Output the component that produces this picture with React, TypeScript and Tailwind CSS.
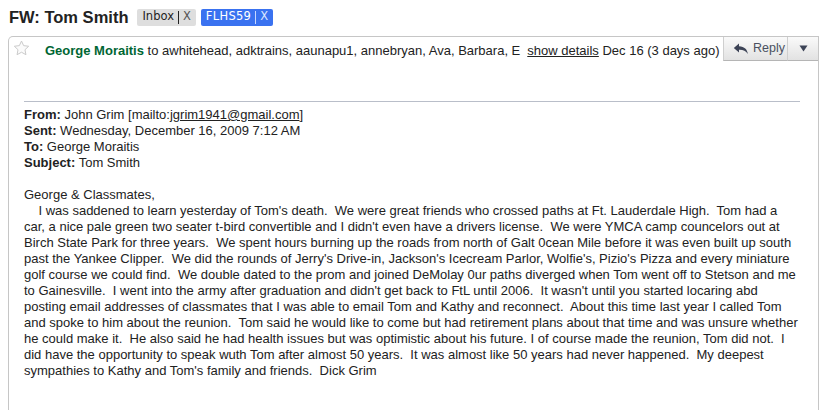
import React from "react";

const bodyLines = [
  "    I was saddened to learn yesterday of Tom's death.  We were great friends who crossed paths at Ft. Lauderdale High.  Tom had a",
  "car, a nice pale green two seater t-bird convertible and I didn't even have a drivers license.  We were YMCA camp councelors out at",
  "Birch State Park for three years.  We spent hours burning up the roads from north of Galt 0cean Mile before it was even built up south",
  "past the Yankee Clipper.  We did the rounds of Jerry's Drive-in, Jackson's Icecream Parlor, Wolfie's, Pizio's Pizza and every miniature",
  "golf course we could find.  We double dated to the prom and joined DeMolay 0ur paths diverged when Tom went off to Stetson and me",
  "to Gainesville.  I went into the army after graduation and didn't get back to FtL until 2006.  It wasn't until you started locaring abd",
  "posting email addresses of classmates that I was able to email Tom and Kathy and reconnect.  About this time last year I called Tom",
  "and spoke to him about the reunion.  Tom said he would like to come but had retirement plans about that time and was unsure whether",
  "he could make it.  He also said he had health issues but was optimistic about his future. I of course made the reunion, Tom did not.  I",
  "did have the opportunity to speak wuth Tom after almost 50 years.  It was almost like 50 years had never happened.  My deepest",
  "sympathies to Kathy and Tom's family and friends.  Dick Grim",
];

export default function App() {
  return (
    <div className="w-[819px] h-[410px] bg-white overflow-hidden font-['Liberation_Sans',Arial,sans-serif] text-black">
      {/* Title row */}
      <div className="flex items-center h-[33px] pl-[9px] pt-[1px]">
        <span className="text-[16.5px] font-bold text-[#222]">FW: Tom Smith</span>
        <div className="ml-[9px] flex items-center h-[17px] bg-[#dedede] rounded-[2px] px-[5px] text-[11.5px] font-['DejaVu_Sans',Verdana,sans-serif] text-[#222]">
          <span>Inbox</span>
          <span className="mx-[4px] w-px h-[13px] bg-[#222]" />
          <span className="text-[#555]">X</span>
        </div>
        <div className="ml-[5px] flex items-center h-[17px] bg-[#3a72f0] rounded-[2px] px-[5px] text-[11.5px] font-['DejaVu_Sans',Verdana,sans-serif] text-white">
          <span className="tracking-[0.3px]">FLHS59</span>
          <span className="mx-[4px] w-px h-[13px] bg-[#c8d8ff]" />
          <span className="text-[#dbe6ff]">X</span>
        </div>
      </div>

      {/* Message card */}
      <div className="ml-[8px] mt-[3px] h-[380px] border-l border-t border-r border-[#c6c6c6] rounded-tl-[5px]">
        {/* Header row */}
        <div className="flex items-start h-[24px] text-[13px]">
          <div className="w-[36px] pl-[4px] pt-[3px]">
            <svg width="17" height="16" viewBox="0 0 24 23">
              <path
                d="M12 1.5l3.1 6.6 7.2.9-5.3 5 1.4 7.1L12 17.6l-6.4 3.5 1.4-7.1-5.3-5 7.2-.9z"
                fill="#fbfbfb"
                stroke="#c9c9c9"
                strokeWidth="1.4"
                strokeLinejoin="round"
              />
            </svg>
          </div>
          <div className="flex-1 pt-[4px] whitespace-nowrap overflow-hidden">
            <span className="font-bold text-[#006633]">George Moraitis</span>
            <span className="text-[#222]"> to awhitehead, adktrains, aaunapu1, annebryan, Ava, Barbara, E</span>
            <span className="ml-[7px] underline text-[#222]">show details</span>
            <span className="text-[#222]"> Dec 16 (3 days ago)</span>
          </div>
          <div className="flex h-[24px] ml-[3px]">
            <div className="w-[65px] h-[24px] flex items-center pl-[9px] border border-[#cfcfcf] border-t-0 border-b-[#b5b5b5] bg-gradient-to-b from-[#fafafa] to-[#e2e2e2] text-[12.5px] text-[#4a5060]">
              <svg width="16" height="12" viewBox="0 0 16 12" className="mr-[4px]">
                <path d="M6 0.5 L0.8 5 L6 9.5 V6.8 C10 6.6 12.8 8 14.8 11 C14.3 6.5 11.5 3.6 6 3.3 Z" fill="#3c4356" />
              </svg>
              <span>Reply</span>
            </div>
            <div className="w-[30px] h-[24px] flex items-center justify-center border-l-0 border-b border-[#b5b5b5] bg-gradient-to-b from-[#fafafa] to-[#e2e2e2]">
              <svg width="9" height="7" viewBox="0 0 9 7">
                <path d="M0.5 0.5 H8.5 L4.5 6.5 Z" fill="#3c4356" />
              </svg>
            </div>
          </div>
        </div>

        {/* Body */}
        <div className="pl-[15px] pr-[18px] pt-[40px] text-[13px] leading-[16px] text-[#222]">
          <div className="border-t border-[#b9bec9] pt-[5px]">
            <div>
              <b>From:</b> John Grim [mailto:<span className="underline">jgrim1941@gmail.com</span>]
            </div>
            <div>
              <b>Sent:</b> Wednesday, December 16, 2009 7:12 AM
            </div>
            <div>
              <b>To:</b> George Moraitis
            </div>
            <div>
              <b>Subject:</b> Tom Smith
            </div>
            <div className="h-[16px]" />
            <div>George &amp; Classmates,</div>
            {bodyLines.map((l, i) => (
              <div key={i} className="whitespace-pre">
                {l}
              </div>
            ))}
          </div>
        </div>
      </div>
    </div>
  );
}
